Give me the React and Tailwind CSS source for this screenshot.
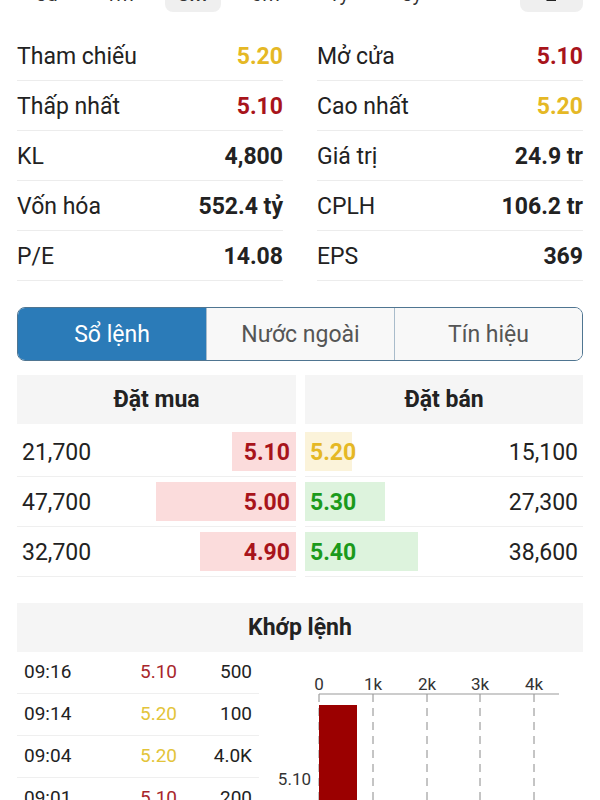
import React from 'react';

const RED = 'text-[#a8141b]';
const YEL = 'text-[#e5b825]';
const GRN = 'text-[#1b9a1b]';

const periods = ['5d', '1m', '3m', '6m', '1y', '5y'];

const stats = [
    ['Tham chiếu', '5.20', YEL, 'Mở cửa', '5.10', RED],
    ['Thấp nhất', '5.10', RED, 'Cao nhất', '5.20', YEL],
    ['KL', '4,800', '', 'Giá trị', '24.9 tr', ''],
    ['Vốn hóa', '552.4 tỷ', '', 'CPLH', '106.2 tr', ''],
    ['P/E', '14.08', '', 'EPS', '369', ''],
];

const buys = [
    { qty: '21,700', price: '5.10', w: 'w-[64px]' },
    { qty: '47,700', price: '5.00', w: 'w-[140px]' },
    { qty: '32,700', price: '4.90', w: 'w-[96px]' },
];

const sells = [
    { qty: '15,100', price: '5.20', w: 'w-[47px]', bg: 'bg-[#fbf3da]', color: YEL },
    { qty: '27,300', price: '5.30', w: 'w-[80px]', bg: 'bg-[#ddf3dd]', color: GRN },
    { qty: '38,600', price: '5.40', w: 'w-[113px]', bg: 'bg-[#ddf3dd]', color: GRN },
];

const matches = [
    ['09:16', '5.10', 'text-[#a8262b]', '500'],
    ['09:14', '5.20', 'text-[#e3c43a]', '100'],
    ['09:04', '5.20', 'text-[#e3c43a]', '4.0K'],
    ['09:01', '5.10', 'text-[#a8262b]', '200'],
];

function VolumeChart() {
    const ticks = [
        { x: 60, label: '0' },
        { x: 114, label: '1k' },
        { x: 168, label: '2k' },
        { x: 221, label: '3k' },
        { x: 275, label: '4k' },
    ];
    return (
        <svg width="324" height="150" viewBox="0 0 324 150" className="block">
            {ticks.map((t) => (
                <g key={t.label}>
                    <text x={t.x} y="38" textAnchor="middle" fontSize="17" fill="#333" fontFamily="Roboto, sans-serif">
                        {t.label}
                    </text>
                    <line x1={t.x} y1="42" x2={t.x} y2="150" stroke="#8a8a8a" strokeWidth="1" strokeDasharray="8 6" />
                </g>
            ))}
            <line x1="60" y1="42" x2="300" y2="42" stroke="#9a9a9a" strokeWidth="1.2" />
            <rect x="60" y="53" width="38" height="100" fill="#9b0000" />
            <text x="52" y="133" textAnchor="end" fontSize="17" fill="#333" fontFamily="Roboto, sans-serif">
                5.10
            </text>
        </svg>
    );
}

export default function App() {
    return (
        <div className="w-[600px] h-[800px] overflow-hidden bg-white text-[#222] font-['Roboto',sans-serif]">
            {/* period tabs (mostly scrolled off the top) */}
            <div className="flex items-center h-[36px] -mt-[24px] px-[10px] pr-[17px] text-[20px] text-[#333]">
                {periods.map((p) => (
                    <div key={p} className="w-[73px] flex justify-center">
                        <div className={`w-[56px] h-[36px] rounded-[8px] flex items-center justify-center ${p === '3m' ? 'bg-[#efefef] font-medium' : ''}`}>
                            {p}
                        </div>
                    </div>
                ))}
                <div className="ml-auto w-[63px] h-[36px] rounded-[8px] bg-[#efefef] flex items-center justify-center">
                    <svg width="12" height="16" viewBox="0 0 12 16">
                        <path d="M2 4 L10 4 L2 14 L10 14" fill="none" stroke="#222" strokeWidth="1.8" />
                    </svg>
                </div>
            </div>

            {/* stats */}
            <div className="grid grid-cols-2 gap-x-[34px] px-[17px] mt-[19px]">
                {stats.map((r) => (
                    <React.Fragment key={r[0]}>
                        <div className="h-[50px] pt-[4px] flex items-center justify-between border-b border-[#ececec] text-[23px]">
                            <span>{r[0]}</span>
                            <span className={`font-bold ${r[2]}`}>{r[1]}</span>
                        </div>
                        <div className="h-[50px] pt-[4px] flex items-center justify-between border-b border-[#ececec] text-[23px]">
                            <span>{r[3]}</span>
                            <span className={`font-bold ${r[5]}`}>{r[4]}</span>
                        </div>
                    </React.Fragment>
                ))}
            </div>

            {/* segmented tabs */}
            <div className="mx-[17px] mt-[26px] h-[54px] flex rounded-[8px] border border-[#4f7591] overflow-hidden text-[23px]">
                <div className="w-[188px] pt-[3px] bg-[#2b7bb8] text-white flex items-center justify-center">Sổ lệnh</div>
                <div className="flex-1 pt-[3px] bg-[#f8f8f8] text-[#555] flex items-center justify-center border-l border-[#a9bccb]">Nước ngoài</div>
                <div className="flex-1 pt-[3px] bg-[#f8f8f8] text-[#555] flex items-center justify-center border-l border-[#a9bccb]">Tín hiệu</div>
            </div>

            {/* order book */}
            <div className="mx-[17px] mt-[14px] grid grid-cols-[279px_278px] gap-x-[9px]">
                <div className="h-[49px] pt-[2px] bg-[#f5f5f5] flex items-center justify-center font-bold text-[23px]">Đặt mua</div>
                <div className="h-[49px] pt-[2px] bg-[#f5f5f5] flex items-center justify-center font-bold text-[23px]">Đặt bán</div>
                <div className="mt-[3px]">
                    {buys.map((b) => (
                        <div key={b.qty} className="h-[50px] flex items-center justify-between border-b border-[#efefef] text-[23px]">
                            <span className="pl-[5px] pt-[3px]">{b.qty}</span>
                            <div className={`${b.w} h-[39px] pt-[3px] bg-[#fbdcdc] flex items-center justify-end pr-[6px] font-bold ${RED}`}>
                                {b.price}
                            </div>
                        </div>
                    ))}
                </div>
                <div className="mt-[3px]">
                    {sells.map((s) => (
                        <div key={s.qty} className="h-[50px] flex items-center justify-between border-b border-[#efefef] text-[23px]">
                            <div className={`${s.w} h-[39px] pt-[3px] ${s.bg} flex items-center pl-[5px] font-bold ${s.color}`}>
                                {s.price}
                            </div>
                            <span className="pr-[5px] pt-[3px]">{s.qty}</span>
                        </div>
                    ))}
                </div>
            </div>

            {/* matched orders */}
            <div className="mx-[17px] mt-[26px]">
                <div className="h-[49px] pt-[2px] bg-[#f5f5f5] flex items-center justify-center font-bold text-[23px]">Khớp lệnh</div>
                <div className="flex">
                    <div className="w-[242px]">
                        {matches.map((m) => (
                            <div key={m[0]} className="h-[42px] flex items-center border-b border-[#efefef] text-[19px] px-[7px]">
                                <span className="w-[116px]">{m[0]}</span>
                                <span className={`w-[50px] ${m[2]}`}>{m[1]}</span>
                                <span className="flex-1 text-right">{m[3]}</span>
                            </div>
                        ))}
                    </div>
                    <VolumeChart />
                </div>
            </div>
        </div>
    );
}
